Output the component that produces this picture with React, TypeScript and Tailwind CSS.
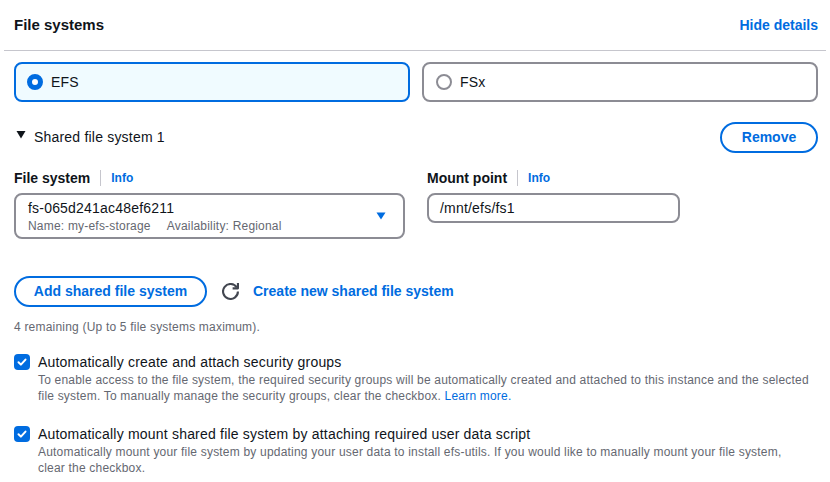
import React from 'react';

const blue = 'text-[#006ce0]';

const Caret = ({ className }: { className?: string }) => (
  <svg width="16" height="16" viewBox="0 0 16 16" className={className}>
    <path d="M3.5 4.5h9l-4.5 7z" fill="currentColor" />
  </svg>
);

const Check = () => (
  <span className="flex h-[16px] w-[16px] shrink-0 items-center justify-center rounded-[4px] bg-[#006ce0]">
    <svg width="12" height="12" viewBox="0 0 12 12">
      <path d="M2.5 6.2l2.4 2.4 4.6-5" fill="none" stroke="white" strokeWidth="2" strokeLinecap="round" strokeLinejoin="round" />
    </svg>
  </span>
);

const Label = ({ text }: { text: string }) => (
  <div className="flex h-[20px] items-center tracking-normal">
    <span className="text-[14px] font-bold">{text}</span>
    <span className="mx-[10px] h-[16px] w-px bg-[#c6c6cd]" />
    <span className={`text-[12px] font-bold ${blue}`}>Info</span>
  </div>
);

const App = () => {
  return (
    <div className="h-[482px] w-[830px] bg-white tracking-[0.2px] text-[#0f141a]" style={{ fontFamily: '"Liberation Sans", Arial, sans-serif' }}>
      <div className="flex h-[50px] items-center justify-between pl-[14px] pr-[12px] tracking-normal">
        <h2 className="text-[15px] font-bold">File systems</h2>
        <span className={`text-[14px] font-bold ${blue}`}>Hide details</span>
      </div>
      <div className="mx-[4px] h-px bg-[#c6c6cd]" />

      <div className="mt-[11px] grid grid-cols-2 gap-[12px] pl-[14px] pr-[12px]">
        <div className="flex h-[40px] items-center rounded-[8px] border-2 border-[#006ce0] bg-[#f0fbff] pl-[11px]">
          <span className="h-[16px] w-[16px] rounded-full border-[5px] border-[#006ce0] bg-white" />
          <span className="ml-[8px] text-[14px]">EFS</span>
        </div>
        <div className="flex h-[40px] items-center rounded-[8px] border-2 border-[#8c8c94] pl-[12px]">
          <span className="h-[16px] w-[16px] rounded-full border-2 border-[#8c8c94] bg-white" />
          <span className="ml-[8px] text-[14px]">FSx</span>
        </div>
      </div>

      <div className="mt-[20px] flex h-[31px] items-center justify-between pl-[13px] pr-[12px]">
        <div className="flex items-center">
          <svg width="16" height="16" viewBox="0 0 16 16" className="-mt-[5px] text-[#0f141a]">
            <path d="M3.5 4h9l-4.5 7.5z" fill="currentColor" />
          </svg>
          <span className="ml-[5px] text-[14px]">Shared file system 1</span>
        </div>
        <button className={`h-[31px] w-[98px] rounded-full border-2 border-[#006ce0] text-[14px] font-bold tracking-normal ${blue}`}>Remove</button>
      </div>

      <div className="mt-[15px] flex gap-[22px] pl-[14px]">
        <div className="w-[391px]">
          <Label text="File system" />
          <div className="mt-[5px] flex h-[46px] items-center justify-between rounded-[8px] border-2 border-[#8c8c94] pl-[12px] pr-[14px]">
            <div className="flex flex-col">
              <span className="text-[14px] leading-[20px]">fs-065d241ac48ef6211</span>
              <span className="text-[12px] leading-[16px] text-[#656871]">
                Name: my-efs-storage<span className="ml-[16px]">Availability: Regional</span>
              </span>
            </div>
            <Caret className={blue} />
          </div>
        </div>
        <div className="w-[253px]">
          <Label text="Mount point" />
          <div className="mt-[5px] flex h-[30px] items-center rounded-[8px] border-2 border-[#8c8c94] pl-[11px] text-[14px]">
            /mnt/efs/fs1
          </div>
        </div>
      </div>

      <div className="mt-[37px] flex items-center pl-[14px] tracking-normal">
        <button className={`h-[31px] w-[193px] rounded-full border-2 border-[#006ce0] text-[14px] font-bold ${blue}`}>Add shared file system</button>
        <svg width="17" height="17" viewBox="0 0 16 16" className="ml-[15px] text-[#424650]">
          <path d="M10 5h5V0" fill="none" stroke="currentColor" strokeWidth="2" strokeLinejoin="round" />
          <path d="M15 8a7 7 0 1 1-1.1-3.8" fill="none" stroke="currentColor" strokeWidth="2" />
        </svg>
        <span className={`ml-[14px] text-[14px] font-bold ${blue}`}>Create new shared file system</span>
      </div>
      <p className="mt-[12px] pl-[14px] text-[12px] leading-[16px] text-[#656871]">4 remaining (Up to 5 file systems maximum).</p>

      <div className="mt-[17px] flex gap-[8px] pl-[14px]">
        <div className="flex h-[20px] items-center"><Check /></div>
        <div>
          <p className="text-[14px] leading-[20px]">Automatically create and attach security groups</p>
          <p className="text-[12px] leading-[16px] text-[#656871]">
            To enable access to the file system, the required security groups will be automatically created and attached to this instance and the selected
            <br />
            file system. To manually manage the security groups, clear the checkbox. <span className={blue}>Learn more.</span>
          </p>
        </div>
      </div>

      <div className="mt-[20px] flex gap-[8px] pl-[14px]">
        <div className="flex h-[20px] items-center"><Check /></div>
        <div>
          <p className="text-[14px] leading-[20px]">Automatically mount shared file system by attaching required user data script</p>
          <p className="text-[12px] leading-[16px] text-[#656871]">
            Automatically mount your file system by updating your user data to install efs-utils. If you would like to manually mount your file system,
            <br />
            clear the checkbox.
          </p>
        </div>
      </div>
    </div>
  );
};

export default App;
